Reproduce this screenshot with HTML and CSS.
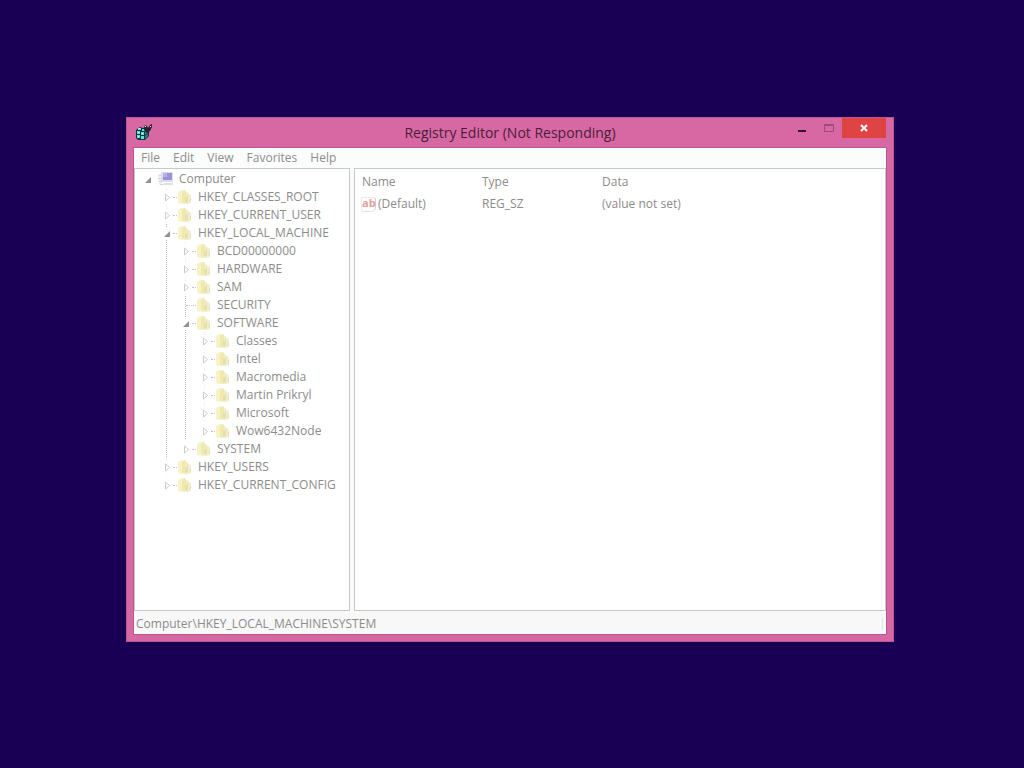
FILE: index.html
```html
<!DOCTYPE html>
<html lang="en">
<head>
    <meta charset="UTF-8">
    <meta name="viewport" content="width=device-width, initial-scale=1.0">
    <title>Registry Editor</title>
    <link rel="stylesheet" href="styles.css">
</head>
<body>
    <!-- Shared icons -->
    <svg class="sprite" aria-hidden="true">
        <symbol id="folder" viewBox="0 0 16 16">
            <path d="M1 3l3-2h4v13l-4 1-3-1z" fill="#f6f3c6"/>
            <path d="M5 3l3-2 2 3v10l-3 1-2-2z" fill="#efe9ac"/>
            <path d="M8 8l2-5 2 2 2 1v8l-3 1H7z" fill="#f2eeca"/>
            <path d="M8 8v5l2 1V8z" fill="#e8e0a0"/>
            <path d="M10.500 6v7M13.500 9v4" stroke="#e2dfc6" fill="none"/>
        </symbol>
        <symbol id="closed" viewBox="0 0 12 12">
            <path d="M4.500 3v7l4-3.500z" fill="#fff" stroke="#cccccc"/>
        </symbol>
        <symbol id="opened" viewBox="0 0 12 12">
            <path d="M9 4v6H3z" fill="#929292"/>
        </symbol>
    </svg>

    <main class="desktop">
        <div class="window">
            <header class="titlebar">
                <svg class="app-icon" viewBox="0 0 18 18" aria-hidden="true">
                    <path d="M1 7l4-3 3 1 3-1 3 3v6l-4 4H3l-2-2z" fill="#12343c"/>
                    <path d="M3 5h3v2H3zM7 6h3v2H7zM2 8h3v3H2zM6 9h3v3H6zM2 12h3v3H2zM6 13h3v3H6z" fill="#5fe0dc"/>
                    <path d="M10 9l3-2v3l-3 2zM10 13l3-2v2l-3 3z" fill="#2f7f8c"/>
                    <path d="M9 5l1-3 2 1 1 2 2-3 2-1v3l-2 4-3 2-3-3z" fill="#26202c"/>
                    <path d="M4 5.500h1M3 9.500h1M7 10.500h1M3 13.500h1M10 3.500h1M15 3.500h1" stroke="#e8ffff"/>
                </svg>
                <h1 class="title">Registry Editor (Not Responding)</h1>
                <div class="controls">
                    <button class="control" aria-label="Minimize">
                        <svg viewBox="0 0 12 12"><path d="M2 8h8v2H2z" fill="#35152b"/></svg>
                    </button>
                    <button class="control" aria-label="Maximize" disabled>
                        <svg viewBox="0 0 12 12"><path d="M1.500 2.500h9v7h-9zM1 3.500h10" fill="none" stroke="#a04a7c"/></svg>
                    </button>
                    <button class="control close" aria-label="Close">
                        <svg viewBox="0 0 12 12"><path d="M3 3l6 6M9 3l-6 6" fill="none" stroke="#fff" stroke-width="2"/></svg>
                    </button>
                </div>
            </header>

            <div class="client">
                <nav class="menubar">
                    <button>File</button>
                    <button>Edit</button>
                    <button>View</button>
                    <button>Favorites</button>
                    <button>Help</button>
                </nav>

                <div class="panes">
                    <section class="tree-pane" aria-label="Keys">
                        <ul class="tree" id="tree"></ul>
                    </section>
                    <section class="value-pane" aria-label="Values">
                        <table class="values">
                            <thead>
                                <tr><th>Name</th><th>Type</th><th>Data</th></tr>
                            </thead>
                            <tbody>
                                <tr>
                                    <td>
                                        <span class="value-name">
                                            <span class="string-icon" aria-hidden="true">ab</span>(Default)
                                        </span>
                                    </td>
                                    <td>REG_SZ</td>
                                    <td>(value not set)</td>
                                </tr>
                            </tbody>
                        </table>
                    </section>
                </div>

                <footer class="statusbar">
                    <span>Computer\HKEY_LOCAL_MACHINE\SYSTEM</span>
                    <span class="grip"></span>
                </footer>
            </div>
        </div>
    </main>

    <template id="computer-icon">
        <svg class="icon" viewBox="0 0 16 16" aria-hidden="true">
            <path d="M0 3h4v11H1z" fill="#f0f0f3"/>
            <path d="M1 4.500h2M0 7.500h3M1 10.500h2M2 13.500h3" stroke="#d0d0d8"/>
            <path d="M3 1h12v10H3z" fill="#dcdcef"/>
            <path d="M5 2h9v7H5z" fill="#9795d6"/>
            <path d="M5 2h4v4H5z" fill="#b4b2e6"/>
            <path d="M6 12h9v2H5z" fill="#dedee6"/>
        </svg>
    </template>

    <script src="script.js"></script>
</body>
</html>
```
FILE: styles.css
```css
:root {
    --frame: #d868a3;
    --desktop: #190054;
    --text: #8c8c8c;
    --line: #c8c8c8;
}

* {
    box-sizing: border-box;
}

body {
    margin: 0;
    background: var(--desktop);
    color: var(--text);
    font: 12px/18px "Open Sans", "Noto Sans", sans-serif;
}

button {
    border: 0;
    padding: 0;
    background: none;
    color: inherit;
    font: inherit;
}

.sprite {
    display: none;
}

.desktop {
    display: flex;
    min-height: 100vh;
    padding: 117px 130px 126px 126px;
}

.window {
    flex: 1;
    display: flex;
    flex-direction: column;
    min-width: 0;
    padding: 0 7px 7px;
    background: var(--frame);
    border: 1px solid #b9588f;
}

.titlebar {
    display: grid;
    grid-template-columns: 1fr auto 1fr;
    height: 30px;
}

.app-icon {
    width: 18px;
    height: 18px;
    margin: 5px 0 0 1px;
}

.title {
    margin: 0;
    color: #48203a;
    font-size: 14px;
    font-weight: 400;
    line-height: 30px;
}

.controls {
    display: flex;
    justify-content: flex-end;
    align-items: flex-start;
}

.control {
    display: grid;
    place-items: center;
    width: 27px;
    height: 20px;
}

.control svg {
    width: 12px;
    height: 12px;
}

.close {
    width: 44px;
    background: #e04343;
}

.client {
    flex: 1;
    display: flex;
    flex-direction: column;
    background: #fafafa;
    outline: 1px solid #b9588f;
}

.menubar {
    display: flex;
    gap: 13px;
    height: 20px;
    padding: 0 7px;
    background: #fbfcfc;
}

.panes {
    flex: 1;
    display: flex;
    gap: 4px;
}

.tree-pane,
.value-pane {
    background: #fff;
    border: 1px solid var(--line);
}

.tree-pane {
    width: 216px;
    padding: 1px 7px;
}

.value-pane {
    flex: 1;
    padding: 2px 0;
}

.tree,
.tree ul {
    margin: 0;
    padding: 0;
    list-style: none;
}

.tree ul {
    padding-left: 19px;
}

/* dotted guide that joins a key to its next sibling */
.tree ul > li:not(:last-child) {
    background: repeating-linear-gradient(#ececec 0 1px, transparent 1px 2px) 5px 0 / 1px 100% no-repeat;
}

.tree ul > li.open,
.tree ul > li.leaf {
    background-image: repeating-linear-gradient(#bababa 0 1px, transparent 1px 2px);
}

.key {
    display: flex;
    align-items: center;
    height: 18px;
    white-space: nowrap;
}

.twisty {
    width: 12px;
    height: 12px;
    background: #fff;
}

.twisty svg {
    display: block;
    width: 12px;
    height: 12px;
}

.branch {
    width: 4px;
    border-top: 1px dotted #c4c4c4;
}

.leaf > .key .branch {
    width: 10px;
    margin-left: 6px;
}

.tree > li > .key .branch {
    border-color: transparent;
}

.icon {
    width: 16px;
    height: 16px;
    margin-right: 5px;
}

.values {
    border-collapse: collapse;
    table-layout: fixed;
    width: 360px;
}

.values th,
.values td {
    height: 22px;
    padding: 0 7px;
    font-weight: 400;
    text-align: left;
    white-space: nowrap;
}

.values td:first-child {
    padding-left: 6px;
}

.value-name {
    display: flex;
    align-items: center;
    gap: 2px;
}

.string-icon {
    width: 15px;
    height: 15px;
    border: 1px solid #f3e9e9;
    border-right-color: #dccccc;
    border-bottom-color: #eadcdc;
    border-radius: 2px 2px 5px 2px;
    color: #dfa0a0;
    font-size: 11px;
    font-weight: 700;
    line-height: 10px;
    text-align: center;
}

.statusbar {
    display: flex;
    justify-content: space-between;
    align-items: center;
    height: 23px;
    padding: 2px 3px 0 2px;
    background: #f8f8f9;
}

.grip {
    width: 1px;
    height: 12px;
    background: #dce2e6;
}
```
FILE: script.js
```javascript
const registry = {
    name: 'Computer',
    children: [
        { name: 'HKEY_CLASSES_ROOT' },
        { name: 'HKEY_CURRENT_USER' },
        {
            name: 'HKEY_LOCAL_MACHINE',
            children: [
                { name: 'BCD00000000' },
                { name: 'HARDWARE' },
                { name: 'SAM' },
                { name: 'SECURITY', leaf: true },
                {
                    name: 'SOFTWARE',
                    children: [
                        { name: 'Classes' },
                        { name: 'Intel' },
                        { name: 'Macromedia' },
                        { name: 'Martin Prikryl' },
                        { name: 'Microsoft' },
                        { name: 'Wow6432Node' }
                    ]
                },
                { name: 'SYSTEM' }
            ]
        },
        { name: 'HKEY_USERS' },
        { name: 'HKEY_CURRENT_CONFIG' }
    ]
};

const folderIcon = '<svg class="icon" aria-hidden="true"><use href="#folder"/></svg>';
const computerIcon = document.getElementById('computer-icon').innerHTML;

function renderKey(key, icon = folderIcon) {
    const state = key.children ? 'open' : key.leaf ? 'leaf' : 'collapsed';
    const twisty = key.leaf ? '' : `
        <button class="twisty" aria-label="Toggle ${key.name}">
            <svg><use href="#${key.children ? 'opened' : 'closed'}"/></svg>
        </button>`;
    const children = key.children
        ? `<ul>${key.children.map(child => renderKey(child)).join('')}</ul>`
        : '';

    return `
        <li class="${state}">
            <div class="key">${twisty}<span class="branch"></span>${icon}<span>${key.name}</span></div>
            ${children}
        </li>`;
}

document.getElementById('tree').innerHTML = renderKey(registry, computerIcon);
```
